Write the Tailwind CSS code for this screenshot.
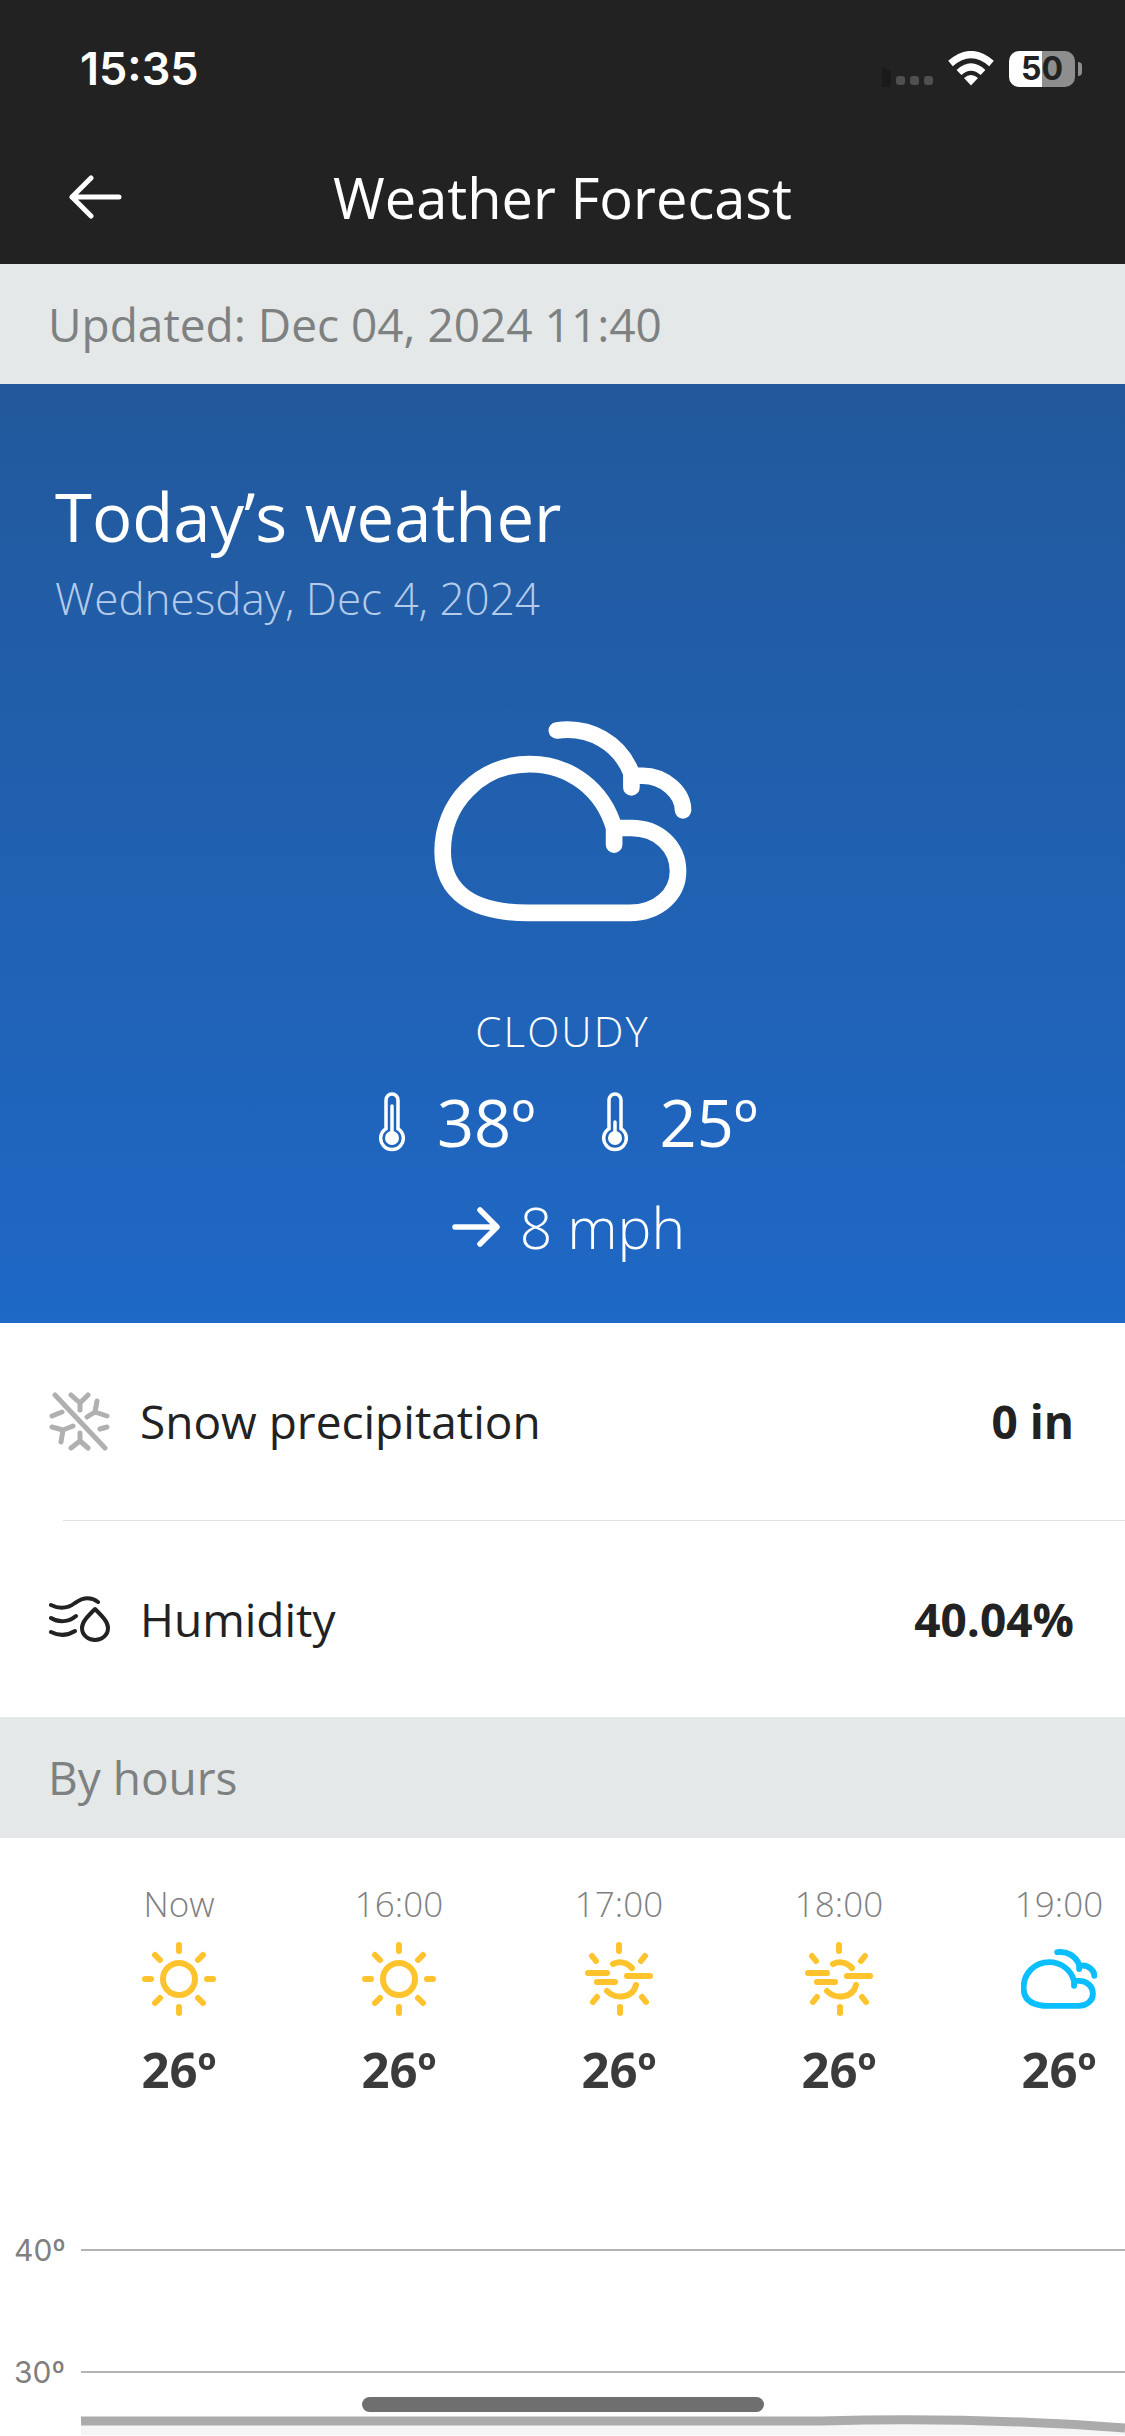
<!DOCTYPE html>
<html lang="en">
<head>
<meta charset="utf-8">
<meta name="viewport" content="width=device-width, initial-scale=1">
<title>Weather Forecast</title>
<script src="https://cdn.jsdelivr.net/npm/@tailwindcss/browser@4"></script>
</head>
<body class="bg-white font-['Open_Sans','Noto_Sans',sans-serif] text-[#222222]">
<svg class="hidden" aria-hidden="true">
  <symbol id="cloud" viewBox="102 92 775 607" fill="none" stroke="currentColor" stroke-linecap="round" stroke-linejoin="round">
    <path d="M643 465V415C610 300 510 223 390 223C240 223 128 340 128 485C128 610 220 670 385 670H690C775 670 835 615 835 545C835 470 775 415 695 415H650"/>
    <path d="M471 122C570 108 660 160 695 250V293M700 258H728C795 258 850 310 850 362"/>
  </symbol>
  <symbol id="sun" viewBox="-38 -38 76 76" fill="none" stroke="currentColor" stroke-width="6" stroke-linecap="round">
    <circle r="16"/>
    <path d="M0-34V-28M0 28V34M-34 0H-28M28 0H34M-24-24L-19-19M24-24L19-19M-24 24L-19 19M24 24L19 19"/>
  </symbol>
  <symbol id="haze" viewBox="-38 -38 76 76" fill="none" stroke="currentColor" stroke-width="6" stroke-linecap="round">
    <path d="M0-34V-28M1 28V34M-27-23L-23-18M26-23L22-18M-26 23L-22 18M27 23L23 18M-31-6H-12M-22 3H-4M8-3H31M-6-15C0-18 8-17 13-11M-12 12C-3 21 14 19 17 6"/>
  </symbol>
</svg>
<div class="flex min-h-screen flex-col overflow-hidden">
  <header class="bg-[#222222] text-white">
    <div class="flex h-[138px] items-center justify-between pr-[43px] pl-[80px]">
      <time class="font-['Inter',sans-serif] text-[45px] font-semibold">15:35</time>
      <div class="flex items-center gap-[15px]">
        <svg class="h-[36px] w-[52px]" viewBox="0 0 52 36" aria-label="No signal">
          <path fill="#1a1a1a" d="M1 16l9 4v16H1z"/>
          <g fill="#505050"><rect x="15" y="25" width="9" height="9" rx="3"/><rect x="29" y="25" width="9" height="9" rx="3"/><rect x="43" y="25" width="9" height="9" rx="3"/></g>
        </svg>
        <svg class="h-[36px] w-[46px]" viewBox="0 0 46 36" fill="none" stroke="#fff" stroke-width="7" aria-label="Wi-Fi">
          <path d="M2.500 12.500Q23-5.500 43.500 12.500M11 21.500Q23 10.500 35 21.500"/>
          <path fill="#fff" stroke="none" d="M16 27Q23 21 30 27L23 34.500z"/>
        </svg>
        <div class="flex items-center gap-[3px]">
          <div class="flex h-[36px] w-[66px] items-center justify-center rounded-[10px] bg-linear-to-r from-white from-50% to-[#8e8e8e] to-50% font-['Inter',sans-serif] text-[32px] font-bold text-[#222222]">50</div>
          <div class="h-[14px] w-[4px] rounded-r-full bg-[#8e8e8e]"></div>
        </div>
      </div>
    </div>
    <div class="grid h-[126px] grid-cols-[122px_1fr_122px] items-center pb-[8px]">
      <button type="button" aria-label="Back" class="justify-self-end">
        <svg class="h-[44px] w-[54px]" viewBox="0 0 54 44" fill="none" stroke="#fff" stroke-width="5" stroke-linecap="round" stroke-linejoin="round"><path d="M51 22H4M23 3L4 22L23 41"/></svg>
      </button>
      <h1 class="text-center text-[56px] leading-[80px]">Weather Forecast</h1>
    </div>
  </header>

  <p class="flex h-[120px] items-center bg-[#e4e8e8] px-[48px] text-[46px] text-[#7e8181]">Updated: Dec 04, 2024 11:40</p>

  <section class="flex flex-col bg-linear-to-b from-[#22599c] to-[#1e68c6] px-[55px] pt-[84px] pb-[52px] text-white">
    <h2 class="text-[67px] leading-[96px]">Today’s weather</h2>
    <p class="text-[44px] leading-[68px] font-light text-[#b5cbea]">Wednesday, Dec 4, 2024</p>
    <svg class="mt-[88px] h-[203px] w-[258px] self-center" stroke-width="50" aria-label="Cloudy"><use href="#cloud"/></svg>
    <p class="mt-[78px] text-center text-[42px] leading-[60px] font-light tracking-wider">CLOUDY</p>
    <div class="mt-[16px] flex items-center justify-center gap-[66px] pl-[12px] text-[65px] leading-[90px]">
      <div class="flex items-center gap-[32px]">
        <svg class="h-[60px] w-[26px]" viewBox="0 0 26 60" fill="none" stroke="#fff" stroke-width="3.500" stroke-linecap="round" aria-label="High"><path d="M7 8a6 6 0 0 1 12 0v28.700a11.300 11.300 0 1 1-12 0z"/><path d="M13 14V44"/><circle cx="13" cy="46" r="7" fill="#fff" stroke="none"/></svg>
        <span>38º</span>
      </div>
      <div class="flex items-center gap-[32px]">
        <svg class="h-[60px] w-[26px]" viewBox="0 0 26 60" fill="none" stroke="#fff" stroke-width="3.500" stroke-linecap="round" aria-label="Low"><path d="M7 8a6 6 0 0 1 12 0v28.700a11.300 11.300 0 1 1-12 0z"/><path d="M13 30V44"/><circle cx="13" cy="46" r="7" fill="#fff" stroke="none"/></svg>
        <span>25º</span>
      </div>
    </div>
    <div class="mt-[16px] flex items-center justify-center gap-[20px] pl-[12px] text-[57px] leading-[88px] font-light">
      <svg class="h-[40px] w-[48px]" viewBox="0 0 48 40" fill="none" stroke="#fff" stroke-width="5.500" stroke-linecap="round" stroke-linejoin="round" aria-label="Wind"><path d="M3 20H44M28 3L45 20L28 37"/></svg>
      <span>8 mph</span>
    </div>
  </section>

  <dl class="text-[46px]">
    <div class="flex h-[197px] items-center pr-[51px] pl-[49px]">
      <svg class="h-[60px] w-[61px]" viewBox="0 0 61 60" fill="none" stroke="#b0b0b0" stroke-width="5" stroke-linecap="round" stroke-linejoin="round" aria-hidden="true"><path d="M6 3L56 56M22 3L31 11L39 3M31 11V18M48 9L46 20L58 24M46 20L38 25M3 24L13 20M3 35L14 38L12 50M14 38L24 34M51 37L58 35M22 56L31 49L39 56M31 49V41"/></svg>
      <dt class="ml-[30px] flex-1">Snow precipitation</dt>
      <dd class="font-bold">0 in</dd>
    </div>
    <div class="ml-[63px] h-px bg-[#e0e1e1]"></div>
    <div class="flex h-[196px] items-center pr-[51px] pl-[49px]">
      <svg class="h-[46px] w-[61px]" viewBox="0 0 61 46" fill="none" stroke="#222222" stroke-width="4" stroke-linecap="round" stroke-linejoin="round" aria-hidden="true"><path d="M2 9C10 13 18 13 26 7C33 2 41 0 49 6M2 22C10 27 20 26 27 20M2 36C10 40 18 40 26 35M46 13C38 21 33 26 33 32C33 39 39 44 46 44S59 39 59 32C59 26 54 21 46 13z"/></svg>
      <dt class="ml-[30px] flex-1">Humidity</dt>
      <dd class="font-bold">40.04%</dd>
    </div>
  </dl>

  <h2 class="flex h-[121px] items-center bg-[#e4e8e8] px-[48px] text-[46px] text-[#7e8181]">By hours</h2>

  <ul class="flex [scrollbar-width:none] overflow-x-auto pt-[36px] pl-[69px] text-center text-[#3b3b3b]">
    <li class="flex w-[220px] shrink-0 flex-col items-center"><time class="text-[35px] leading-[60px] font-light text-[#808080]">Now</time><svg class="mt-[7px] size-[76px] text-[#fec32d]" aria-label="Sunny"><use href="#sun"/></svg><span class="mt-[18px] text-[49px] leading-[68px] font-bold">26º</span></li>
    <li class="flex w-[220px] shrink-0 flex-col items-center"><time class="text-[35px] leading-[60px] font-light text-[#808080]">16:00</time><svg class="mt-[7px] size-[76px] text-[#fec32d]" aria-label="Sunny"><use href="#sun"/></svg><span class="mt-[18px] text-[49px] leading-[68px] font-bold">26º</span></li>
    <li class="flex w-[220px] shrink-0 flex-col items-center"><time class="text-[35px] leading-[60px] font-light text-[#808080]">17:00</time><svg class="mt-[7px] size-[76px] text-[#fec32d]" aria-label="Hazy sun"><use href="#haze"/></svg><span class="mt-[18px] text-[49px] leading-[68px] font-bold">26º</span></li>
    <li class="flex w-[220px] shrink-0 flex-col items-center"><time class="text-[35px] leading-[60px] font-light text-[#808080]">18:00</time><svg class="mt-[7px] size-[76px] text-[#fec32d]" aria-label="Hazy sun"><use href="#haze"/></svg><span class="mt-[18px] text-[49px] leading-[68px] font-bold">26º</span></li>
    <li class="flex w-[220px] shrink-0 flex-col items-center"><time class="text-[35px] leading-[60px] font-light text-[#808080]">19:00</time><svg class="mt-[7px] size-[76px] text-[#0bbffe]" stroke-width="60" aria-label="Cloudy"><use href="#cloud"/></svg><span class="mt-[18px] text-[49px] leading-[68px] font-bold">26º</span></li>
  </ul>

  <section aria-label="Temperature chart" class="mt-[86px] font-['Inter',sans-serif] text-[30px] text-[#808080]">
    <div class="flex h-[122px] items-center"><span class="w-[81px] pl-[14px]">40º</span><div class="h-[2px] flex-1 bg-[#b4b4b4]"></div></div>
    <div class="flex h-[122px] items-center"><span class="w-[81px] pl-[14px]">30º</span><div class="h-[2px] flex-1 bg-[#b4b4b4]"></div></div>
    <div class="-mt-[20px] pl-[81px]">
      <svg class="h-[22px] w-full" viewBox="0 0 1044 22" preserveAspectRatio="none" aria-hidden="true">
        <path fill="#f5f5f5" d="M0 9H740C850 5 940 7 1044 15V22H0z"/>
        <path fill="none" stroke="#ababab" stroke-width="9" d="M0 8H740C850 5 940 7 1044 15"/>
      </svg>
    </div>
  </section>
</div>
<div class="fixed inset-x-0 bottom-[24px] mx-auto h-[15px] w-[402px] rounded-full bg-[#6f6f6f]"></div>
</body>
</html>
